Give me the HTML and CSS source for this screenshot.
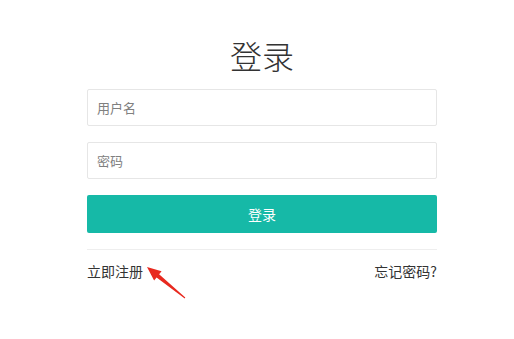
FILE: index.html
```
<!DOCTYPE html>
<html>
<head>
<meta charset="utf-8">
<link rel="stylesheet" href="styles.css">
</head>
<body>
<div class="page">
  <form class="login">
    <h1 class="title">登录</h1>
    <div class="field"><input class="input" type="text" placeholder="用户名"></div>
    <div class="field"><input class="input" type="password" placeholder="密码"></div>
    <button class="btn" type="button">登录</button>
    <div class="links">
      <span class="reg">
        <a class="link" href="#">立即注册</a>
        <svg class="arrow" width="50" height="45" viewBox="0 0 50 45">
          <polygon points="5,7 19.6,11.2 17.1,14.3 43.3,37.6 42.7,38.4 14.6,17.4 12.1,20.5" fill="#e8291f"/>
        </svg>
      </span>
      <a class="link" href="#">忘记密码?</a>
    </div>
  </form>
</div>
</body>
</html>
```
FILE: styles.css
```
html, body {
  margin: 0;
  padding: 0;
  background: #fff;
  min-height: 100%;
}
html {
  height: 100%;
}
body {
  height: 100%;
  font-family: "Noto Sans CJK SC", "Noto Sans", sans-serif;
  color: #333;
}
.page {
  box-sizing: border-box;
  min-height: 339px;
  padding: 30px 0 0 87px;
}
.login {
  width: 350px;
  display: flex;
  flex-direction: column;
}
.title {
  margin: 0 0 9px;
  font-size: 32px;
  font-weight: 300;
  line-height: 50px;
  text-align: center;
  color: #333;
}
.field {
  margin-bottom: 16px;
}
.input {
  box-sizing: border-box;
  width: 100%;
  height: 37px;
  border: 1px solid #e6e6e6;
  border-radius: 2px;
  padding: 0 9px;
  font-family: inherit;
  font-size: 13px;
  color: #333;
  outline: none;
  display: block;
}
.input::placeholder {
  color: #808080;
}
.btn {
  height: 38px;
  border: none;
  border-radius: 2px;
  background: #16b9a7;
  color: #fff;
  font-family: inherit;
  font-size: 14px;
  padding: 0;
  margin-bottom: 16px;
}
.links {
  border-top: 1px solid #eee;
  padding-top: 10px;
  display: flex;
  justify-content: space-between;
  font-size: 14px;
  line-height: 22px;
}
.link {
  color: #333;
  text-decoration: none;
}
.reg {
  position: relative;
}
.arrow {
  position: absolute;
  left: 55px;
  top: 0;
  overflow: visible;
}
```
